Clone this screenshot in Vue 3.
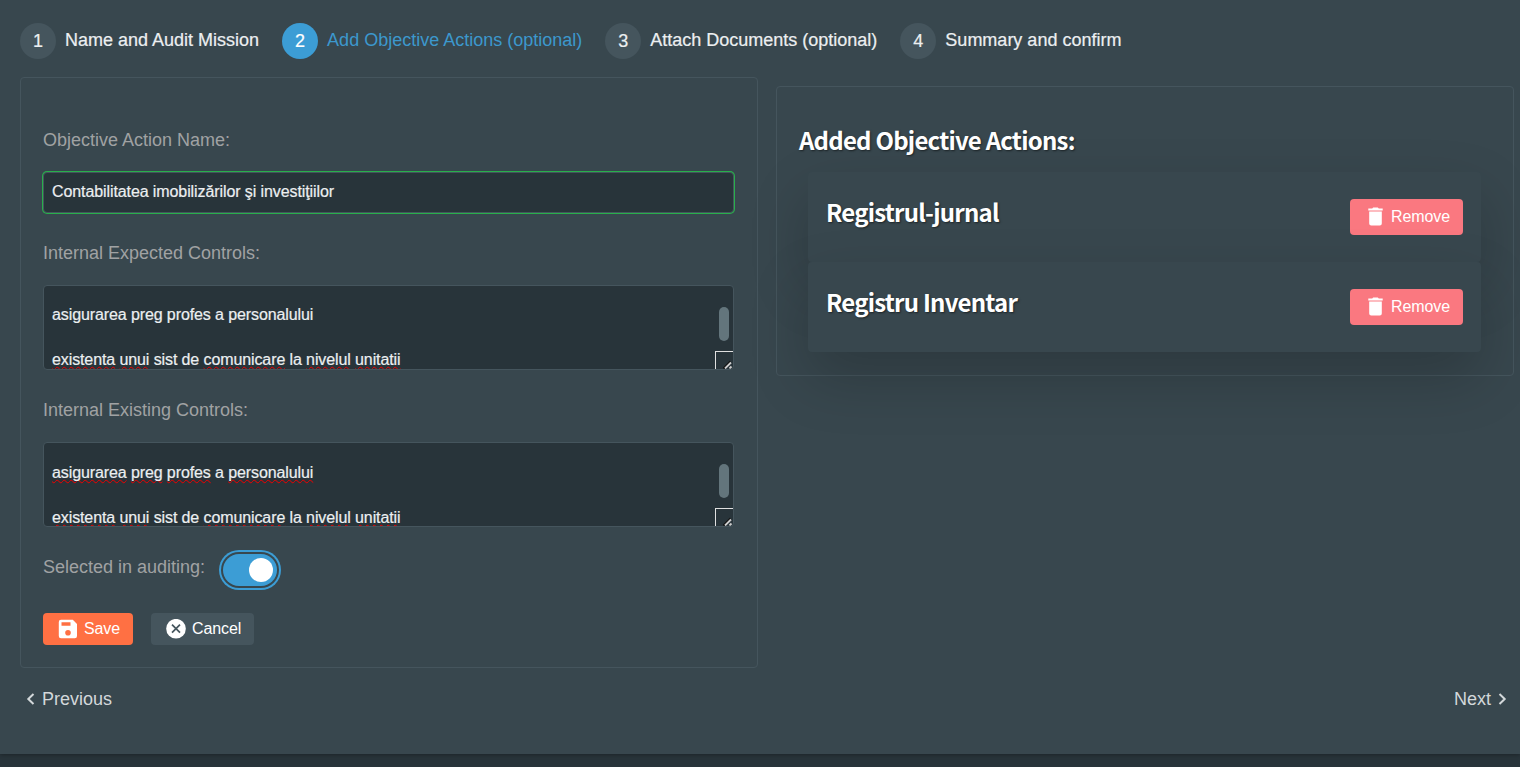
<script setup>
const steps = [
  { n: 1, label: 'Name and Audit Mission' },
  { n: 2, label: 'Add Objective Actions (optional)', active: true },
  { n: 3, label: 'Attach Documents (optional)' },
  { n: 4, label: 'Summary and confirm' },
]
const second = [
  ['existenta', 1], ['unui', 1], ['sist', 0], ['de', 0], ['comunicare', 1], ['la', 0], ['nivelul', 1], ['unitatii', 1],
]
const areas = [
  {
    label: 'Internal Expected Controls:',
    cls: 'expected',
    lines: [[['asigurarea', 0], ['preg', 0], ['profes', 0], ['a', 0], ['personalului', 0]], second],
  },
  {
    label: 'Internal Existing Controls:',
    cls: 'existing',
    lines: [[['asigurarea', 1], ['preg', 1], ['profes', 1], ['a', 0], ['personalului', 1]], second],
  },
]
const added = ['Registrul-jurnal', 'Registru Inventar']
</script>

<template>
  <div class="page">
    <main class="wizard">
      <nav class="steps">
        <div v-for="s in steps" :key="s.n" class="step" :class="{ active: s.active }">
          <span class="num">{{ s.n }}</span>
          <span class="step-label">{{ s.label }}</span>
        </div>
      </nav>

      <div class="columns">
        <section class="card form">
          <label class="label name-label">Objective Action Name:</label>
          <div class="input"><span>Contabilitatea imobilizărilor şi investiţiilor</span></div>

          <template v-for="a in areas" :key="a.label">
            <label class="label area-label" :class="a.cls">{{ a.label }}</label>
            <div class="area" :class="a.cls">
              <div v-for="(l, i) in a.lines" :key="i" class="line">
                <template v-for="(w, j) in l" :key="j"><span :class="{ bad: w[1] }">{{ w[0] }}</span>{{ ' ' }}</template>
              </div>
              <i class="thumb"></i>
              <span class="grip">
                <svg width="17" height="17" viewBox="0 0 17 17">
                  <path d="M7.500 16.500 14.500 9.500" stroke="#111" stroke-width="2" fill="none" />
                  <path d="M9 16.500 15 10.500M13.500 16.500 15.500 14.500" stroke="#ccc" stroke-width="1.800" fill="none" />
                </svg>
              </span>
            </div>
          </template>

          <div class="toggle-row">
            <label class="label toggle-label">Selected in auditing:</label>
            <span class="switch"><i></i></span>
          </div>

          <div class="buttons">
            <button class="btn save">
              <svg width="20" height="20" viewBox="0 0 20 20">
                <path fill="#fff" fill-rule="evenodd" d="M3 .8h11.800L19 5v12a2.200 2.200 0 0 1-2.200 2.200H3A2.200 2.200 0 0 1 .8 17V3A2.200 2.200 0 0 1 3 .8zM3.500 3.200v3.600h9V3.200zM10 11a2.800 2.800 0 1 0 0 5.600 2.800 2.800 0 0 0 0-5.600z" />
              </svg>
              <span>Save</span>
            </button>
            <button class="btn cancel">
              <svg width="20" height="20" viewBox="0 0 20 20">
                <circle cx="10" cy="9.700" r="9.800" fill="#fff" />
                <path d="M6 5.700l8 8M14 5.700l-8 8" stroke="#45555d" stroke-width="1.700" />
              </svg>
              <span>Cancel</span>
            </button>
          </div>
        </section>

        <section class="card added">
          <h2>Added Objective Actions:</h2>
          <div v-for="a in added" :key="a" class="item">
            <h3>{{ a }}</h3>
            <button class="btn remove">
              <svg width="15" height="19" viewBox="0 0 15 19">
                <path fill="#fff" d="M.3 1.600h3.900l1-1h4.600l1 1h3.900v2H.3zM1.200 4.600h12.600v12a2 2 0 0 1-2 2H3.200a2 2 0 0 1-2-2z" />
              </svg>
              <span>Remove</span>
            </button>
          </div>
        </section>
      </div>

      <div class="pager">
        <a class="prev">
          <svg width="9" height="12" viewBox="0 0 9 12"><path d="M7.500 1 2.300 6l5.200 5" fill="none" stroke="currentColor" stroke-width="2" /></svg>
          <span>Previous</span>
        </a>
        <a class="next">
          <span>Next</span>
          <svg width="9" height="12" viewBox="0 0 9 12"><path d="M1.500 1 6.700 6l-5.200 5" fill="none" stroke="currentColor" stroke-width="2" /></svg>
        </a>
      </div>
    </main>
  </div>
</template>

<style>
body {
  background: #28343a;
}
</style>

<style scoped>
.page {
  height: 767px;
  overflow: hidden;
  background: #28343a;
  font-family: "Liberation Sans", Arial, sans-serif;
  color: #eceff1;
}
.wizard {
  box-sizing: border-box;
  height: 754px;
  background: #38474e;
  box-shadow: 0 1px 4px rgba(0, 0, 0, 0.3);
  padding: 23px 6px 0 20px;
  overflow: hidden;
}
.steps {
  display: flex;
  height: 36px;
}
.step {
  display: flex;
  margin-right: 23px;
  white-space: nowrap;
}
.num {
  width: 36px;
  height: 36px;
  border-radius: 50%;
  background: #45555d;
  font-size: 18px;
  line-height: 36px;
  text-align: center;
  margin-right: 9px;
}
.step-label {
  font-size: 18px;
  line-height: 34px;
}
.num,
.step-label {
  -webkit-text-stroke: 0.2px currentColor;
}
.active .num {
  background: #3c9dd5;
  color: #fff;
}
.active .step-label {
  color: #3c98cd;
  -webkit-text-stroke: 0;
}
.columns {
  display: grid;
  grid-template-columns: 738px 738px;
  column-gap: 18px;
  align-items: start;
  margin-top: 18px;
}
.card {
  box-sizing: border-box;
  border: 1px solid #45555d;
  border-radius: 4px;
}
.form {
  height: 591px;
  padding: 51px 23px 0 22px;
}
.label {
  display: block;
  font-size: 18px;
  line-height: 22px;
  color: #a0a2a3;
}
.input {
  box-sizing: border-box;
  height: 41px;
  margin-top: 21px;
  padding-left: 8px;
  border: 1px solid #45555d;
  border-radius: 4px;
  box-shadow: 0 0 0 1px #28b04b;
  background: #28343a;
  font-size: 16px;
  line-height: 38px;
  letter-spacing: -0.095px;
}
.area-label {
  margin-top: 29px;
}
.area {
  box-sizing: border-box;
  position: relative;
  height: 85px;
  margin-top: 21px;
  padding: 17px 8px 0;
  border: 1px solid #45555d;
  border-radius: 4px;
  background: #28343a;
  overflow: hidden;
  font-size: 16px;
  letter-spacing: -0.105px;
}
.input,
.area {
  -webkit-text-stroke: 0.2px currentColor;
}
.area.existing {
  padding-top: 18px;
}
.line {
  height: 23px;
  line-height: 23px;
  margin-bottom: 22px;
}
.bad {
  text-decoration: underline wavy #f00000 1px;
  text-decoration-skip-ink: none;
  text-underline-offset: 1px;
}
.thumb {
  position: absolute;
  right: 4px;
  top: 21px;
  width: 10px;
  height: 34px;
  border-radius: 5px;
  background: #63757c;
}
.grip {
  position: absolute;
  right: 0;
  bottom: 0;
  width: 17px;
  height: 17px;
  border-left: 1px solid #e0e0e0;
  border-top: 1px solid #e0e0e0;
}
.grip svg {
  display: block;
}
.toggle-row {
  display: flex;
  margin-top: 25px;
}
.toggle-label {
  margin-top: 4px;
  width: 180px;
}
.switch {
  box-sizing: border-box;
  display: flex;
  justify-content: flex-end;
  align-items: center;
  width: 54px;
  height: 32px;
  margin-top: 2px;
  padding-right: 4px;
  border-radius: 16px;
  background: #3c9dd5;
  box-shadow: 0 0 0 2px #38474e, 0 0 0 4px #3c9dd5;
}
.switch i {
  width: 24px;
  height: 24px;
  border-radius: 50%;
  background: #fff;
}
.buttons {
  display: flex;
  gap: 18px;
  margin-top: 27px;
}
.btn {
  box-sizing: border-box;
  display: flex;
  align-items: center;
  border: 0;
  border-radius: 4px;
  padding: 0 0 0 15px;
  color: #fff;
  font: 16px/20px "Liberation Sans", Arial, sans-serif;
  letter-spacing: -0.1px;
}
.btn svg {
  flex: none;
}
.save {
  width: 90px;
  height: 32px;
  background: #ff7043;
}
.save span,
.cancel span {
  margin-left: 6px;
}
.cancel {
  width: 103px;
  height: 32px;
  background: #45555d;
}
.added {
  height: 290px;
  margin-top: 9px;
  padding: 35px 32px 0 31px;
}
h2,
h3 {
  margin: 0;
  font-family: "Noto Sans CJK SC", sans-serif;
  font-weight: 700;
  font-size: 24px;
  line-height: 36px;
  letter-spacing: -0.78px;
  color: #fff;
  text-shadow: 1px 1px 2px rgba(0, 0, 0, 0.5);
  white-space: nowrap;
}
h2 {
  margin: 0 0 14px -9px;
}
.item {
  position: relative;
  box-sizing: border-box;
  display: flex;
  justify-content: space-between;
  align-items: flex-start;
  height: 90px;
  padding: 22px 18px 0;
  border-radius: 4px;
  background: #38474e;
  box-shadow: 0 25px 60px rgba(0, 0, 0, 0.2);
}
.remove {
  width: 113px;
  height: 36px;
  margin-top: 5px;
  padding: 0 0 1px 18px;
  background: #fa7880;
}
.remove span {
  margin-left: 8px;
}
.pager {
  display: flex;
  justify-content: space-between;
  margin: 20px 7px 0 6px;
  font-size: 18px;
  line-height: 22px;
  color: #d3d8da;
}
.prev,
.next {
  display: flex;
  align-items: center;
  gap: 7px;
}
</style>
